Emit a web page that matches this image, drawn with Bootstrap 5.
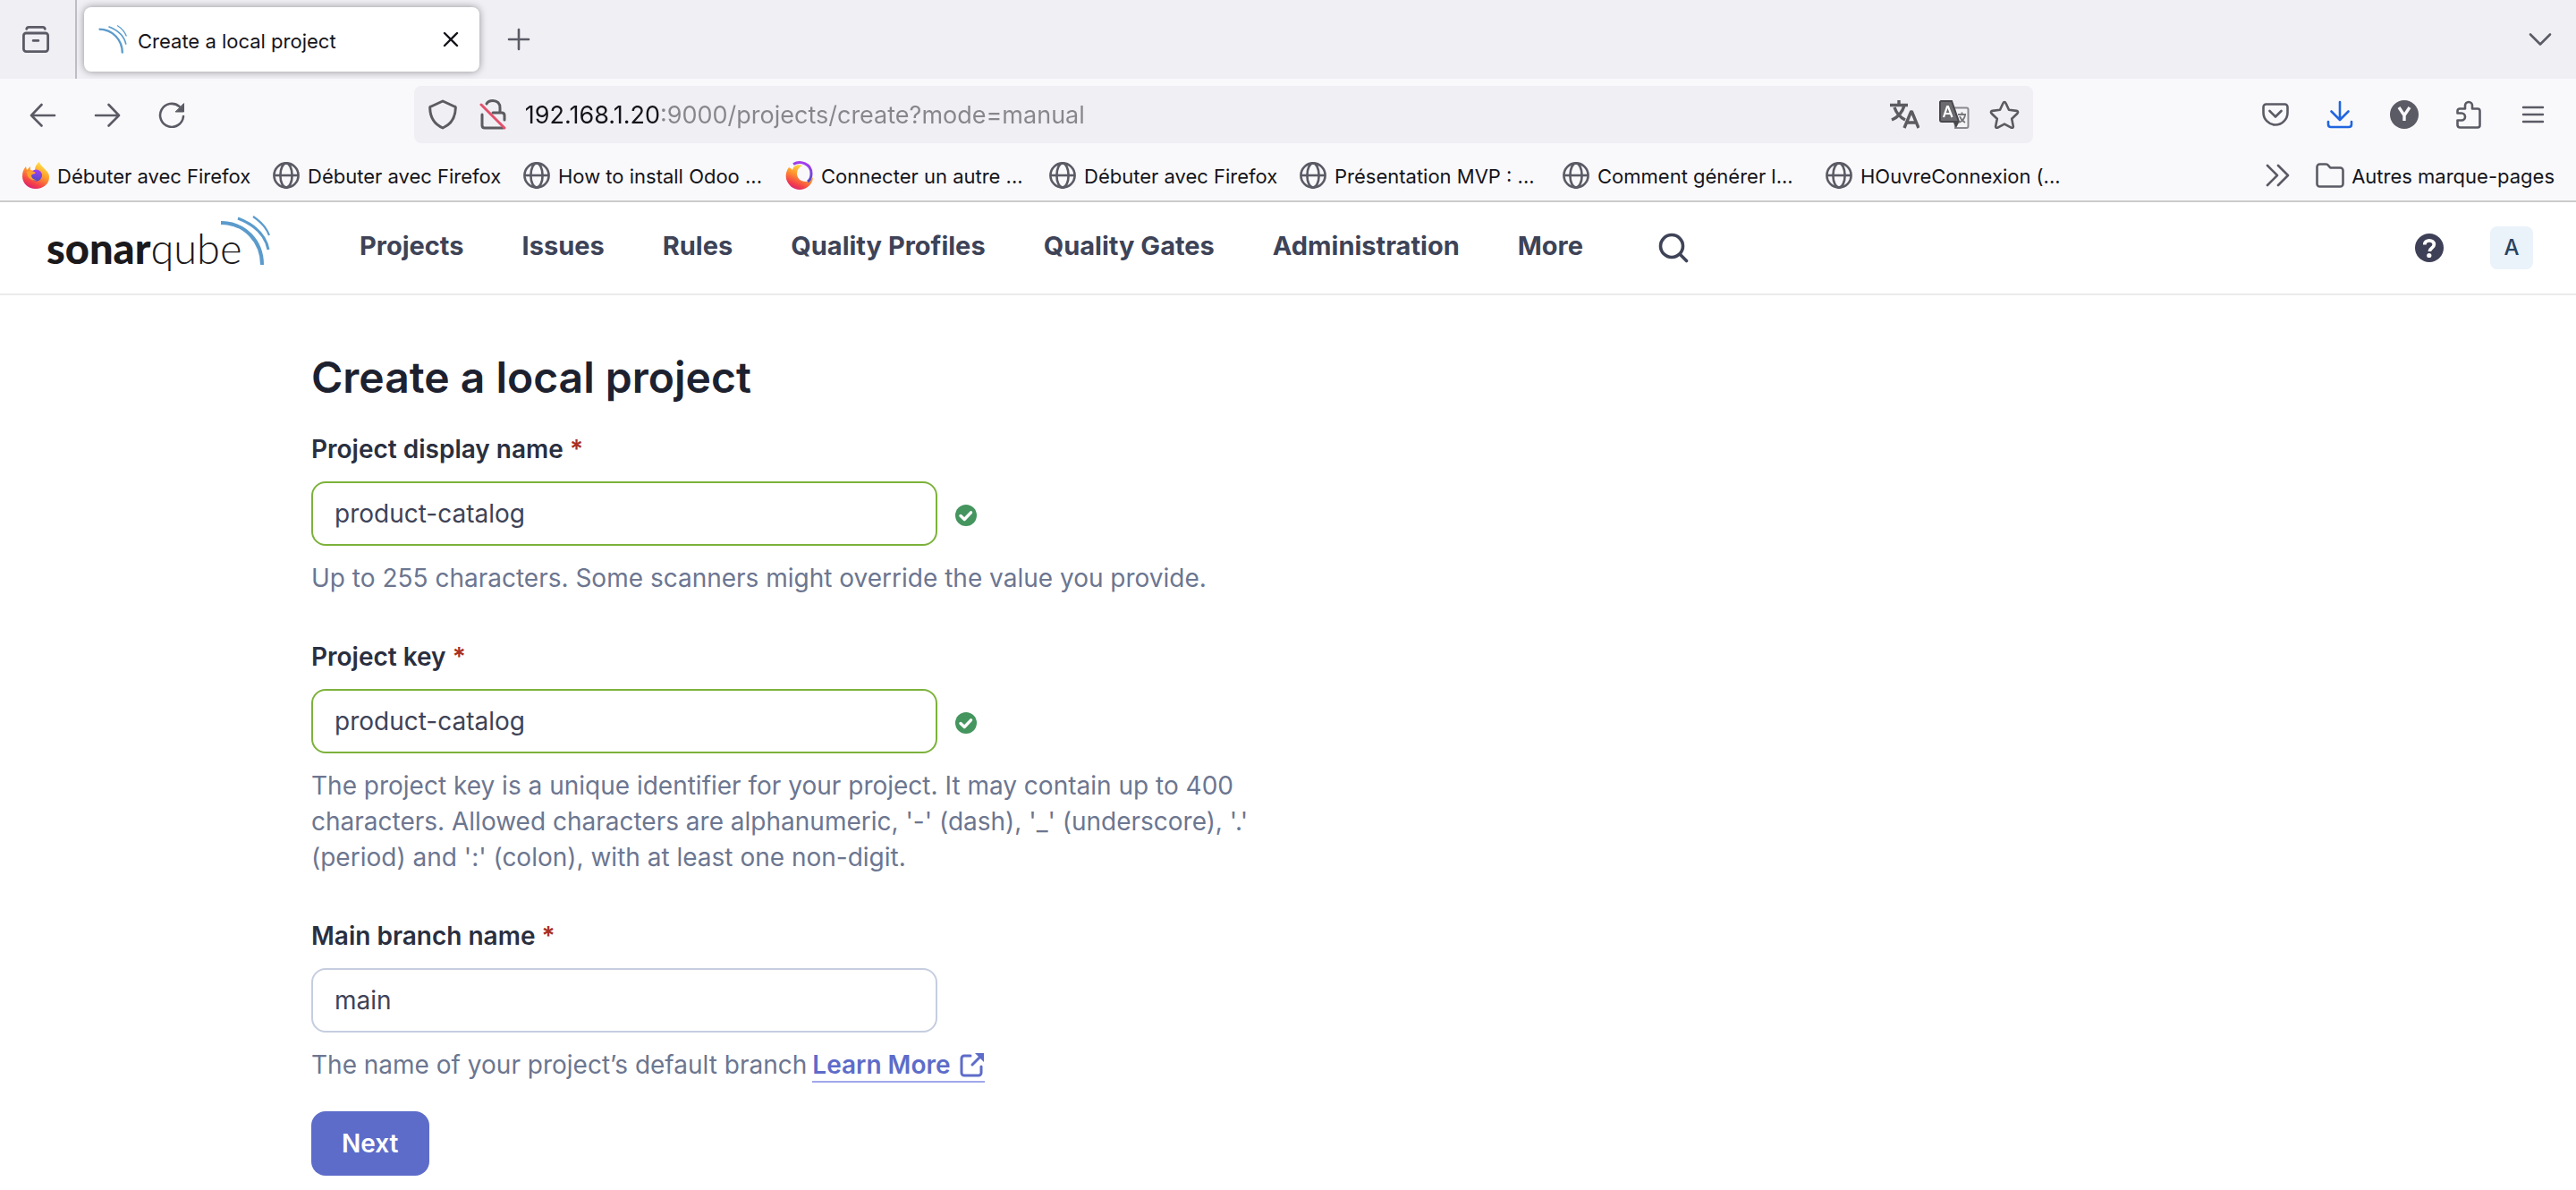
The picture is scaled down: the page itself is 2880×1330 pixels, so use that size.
<!DOCTYPE html>
<html lang="fr">
<head>
<meta charset="utf-8">
<meta name="viewport" content="width=device-width, initial-scale=1">
<title>Create a local project</title>
<link href="https://cdn.jsdelivr.net/npm/bootstrap@5.3.0/dist/css/bootstrap.min.css" rel="stylesheet">
<style>
  :root { --chrome-ink: #5b5b66; --ink: #3e4357; --indigo: #5d6cc9; }
  body { font-family: Inter, "Liberation Sans", sans-serif; font-size: 28px; line-height: 40px; color: var(--ink); background: #fff; }
  svg { display: block; flex: none; }
  svg.line { fill: none; stroke: currentColor; stroke-width: 3; stroke-linecap: round; stroke-linejoin: round; }
  .tool { width: 72px; height: 64px; padding: 0; border: 0; background: none; color: var(--chrome-ink); display: flex; align-items: center; justify-content: center; }

  /* browser window */
  .tab-strip { height: 88px; background: #f0eff4; color: var(--chrome-ink); }
  .view-cell { width: 86px; border-right: 2px solid #bebdc3; }
  .tab-active { width: 442px; height: 72px; border-radius: 8px; background: #fff; color: #15141a; box-shadow: 0 0 8px rgba(0,0,0,.4); font-size: 22px; }
  .tab-active .tool { width: 32px; color: #15141a; }
  .nav-strip { height: 80px; padding: 0 12px; background: #f9f9fb; }
  .flex-gap { flex: 236 1 0; }
  .url-box { flex: 1812 1 0; height: 64px; border-radius: 8px; background: #f0eff4; color: #5b5b60; }
  .url-box .tool { width: 56px; color: #5b5b60; }
  .url-field { font-size: 27px; border: 0; padding: 2px 0 0; outline: 0; color: transparent; background: linear-gradient(90deg, #15141a 152px, #87868b 152px); -webkit-background-clip: text; background-clip: text; min-width: 0; }
  .mark-strip { height: 56px; background: #f9f9fb; font-size: 22px; }
  .mark-link { display: flex; align-items: center; gap: 8px; margin-right: 24px; color: #15141a; text-decoration: none; white-space: nowrap; }
  .mark-link span { width: 216px; padding-top: 2px; }
  .mark-link.long span { width: 230px; }
  .mark-link svg { color: var(--chrome-ink); }
  .more-marks { width: 84px; }
  .window-edge { border-bottom: 2px solid #cccccd; }

  /* application header */
  .app-head { height: 104px; border-bottom: 2px solid #ebebeb; }
  .brand { width: 250px; margin: 0 100px 0 52px; color: #1b191b; font-family: Lato, "Open Sans", sans-serif; font-size: 47px; line-height: 56px; text-decoration: none; }
  .brand b { font-weight: 900; }
  .brand span { font-weight: 300; }
  .brand svg { position: absolute; right: 0; top: -8px; }
  .main-nav { gap: 65px; padding-bottom: 4px; }
  .main-nav a { color: var(--ink); font-size: 29px; font-weight: 700; text-decoration: none; }
  .search-btn { margin-left: 65px; }
  .avatar { width: 48px; height: 48px; margin: 0 48px 0 32px; border: 0; border-radius: 8px; background: #eaf2fa; color: #28435f; font-size: 24px; font-weight: 500; padding: 0; }

  /* form */
  .form-area { padding: 64px 348px 16px; }
  h1 { font-size: 48px; line-height: 56px; font-weight: 600; color: #1d212f; margin-bottom: 32px; }
  .field { margin-bottom: 48px; }
  .field:last-of-type { margin-bottom: 32px; }
  .field-label { display: block; font-weight: 600; color: #2a2f40; margin-bottom: 16px; }
  .req { color: #a92f22; }
  .text-in { width: 700px; height: 72px; border: 2px solid #c5cddf; border-radius: 16px; padding: 0 24px; font-size: 28px; color: var(--ink); box-shadow: none; }
  .text-in.ok { border-color: #7cb23a; }
  .hint { margin: 16px 0 0; max-width: 1052px; color: #6c7690; }
  .more-link { color: var(--indigo); font-weight: 600; text-decoration: none; box-shadow: inset 0 -2px #a0a8ea; display: inline-flex; align-items: center; gap: 10px; margin-left: 6px; }
  .next-btn { height: 72px; padding: 0 34px; border: 0; border-radius: 16px; background: var(--indigo); color: #fff; font-size: 28px; font-weight: 600; }
</style>
<script src="https://cdn.jsdelivr.net/npm/bootstrap@5.3.0/dist/js/bootstrap.bundle.min.js"></script>
</head>
<body>
<svg width="0" height="0" class="position-absolute" aria-hidden="true">
  <defs>
    <symbol id="globe" viewBox="0 0 32 32"><g fill="none" stroke="currentColor" stroke-width="2.6"><circle cx="16" cy="16" r="13.6"/><ellipse cx="16" cy="16" rx="6.6" ry="13.6"/><path d="M2.4 16h27.2"/></g></symbol>
    <symbol id="waves" viewBox="0 0 56 56"><g fill="none" stroke="#5b9bcc"><path stroke-width="4" d="M1 8C28 8 47 29 47 55"/><path stroke-width="3" d="M20 3C38 10 51 22 54 38"/><path stroke-width="2.2" d="M37 1c9 6 15 13 18 21"/></g></symbol>
    <symbol id="tick" viewBox="0 0 24 24"><circle cx="12" cy="12" r="12" fill="#45955f"/><path d="M6 12.5l4.200 4L17.500 8.800" fill="none" stroke="#fff" stroke-width="3.400" stroke-linecap="round" stroke-linejoin="round"/></symbol>
    <linearGradient id="flame" x1=".8" y1="0" x2=".3" y2="1"><stop offset="0" stop-color="#fff04a"/><stop offset=".45" stop-color="#ff9a2c"/><stop offset=".8" stop-color="#f4404a"/><stop offset="1" stop-color="#d81f78"/></linearGradient>
    <linearGradient id="orb" x1=".6" y1="0" x2=".4" y2="1"><stop offset="0" stop-color="#a63ef0"/><stop offset="1" stop-color="#4a4cc4"/></linearGradient>
  </defs>
</svg>

<header class="window-edge">
  <div class="tab-strip d-flex align-items-center">
    <div class="view-cell h-100 d-flex align-items-center">
      <button class="tool w-100 pe-1" aria-label="Firefox View">
        <svg class="line" width="30" height="32" viewBox="0 0 32 32"><path d="M5 3.500c.4-1.500 1.200-2 2.500-2h17c1.300 0 2.100.5 2.500 2"/><rect x="1.500" y="8.500" width="29" height="22" rx="3"/><path d="M13 17.500h6"/></svg>
      </button>
    </div>
    <div class="tab-active d-flex align-items-center ms-2 ps-3 pe-3">
      <svg width="32" height="32"><use href="#waves"/></svg>
      <span class="ms-2 ps-1 pt-1 flex-grow-1">Create a local project</span>
      <button class="tool" aria-label="Fermer l’onglet"><svg class="line" width="18" height="18" viewBox="0 0 18 18"><path stroke-width="2.400" d="M2 2l14 14M16 2L2 16"/></svg></button>
    </div>
    <button class="tool ms-2" aria-label="Nouvel onglet"><svg class="line" width="26" height="26" viewBox="0 0 26 26"><path stroke-width="2.600" d="M13 2v22M2 13h22"/></svg></button>
    <button class="tool ms-auto me-1" aria-label="Lister les onglets"><svg class="line" width="26" height="16" viewBox="0 0 26 16"><path stroke-width="2.600" d="M2 2.500l11 11 11-11"/></svg></button>
  </div>

  <div class="nav-strip d-flex align-items-center">
    <button class="tool" aria-label="Précédent"><svg class="line" width="30" height="28" viewBox="0 0 30 28"><path stroke-width="2.600" d="M28 15H2M13.500 3L2 15l11.500 11.500"/></svg></button>
    <button class="tool" aria-label="Suivant"><svg class="line" width="30" height="28" viewBox="0 0 30 28"><path stroke-width="2.600" d="M2 15h26M16.500 3L28 15 16.500 26.500"/></svg></button>
    <button class="tool" aria-label="Actualiser"><svg class="line" width="30" height="30" viewBox="0 0 30 30"><path stroke-width="2.600" d="M28 17A13 13 0 1 1 23.500 6"/><path d="M28.500 3v9h-9z" fill="currentColor" stroke-width="1"/></svg></button>
    <div class="flex-gap"></div>
    <div class="url-box d-flex align-items-center px-1">
      <button class="tool" aria-label="Protection"><svg class="line" width="32" height="34" viewBox="0 0 32 34"><path d="M16 2l13 6c1 0 1.500 1 1.300 2C30 20 25 28 16 32 7 28 2 20 1.700 10c-.2-1 .3-2 1.300-2z"/></svg></button>
      <button class="tool" aria-label="Connexion non sécurisée"><svg class="line" width="30" height="34" viewBox="0 0 30 34"><path d="M8 5c1-2 4-3.500 7-3.500 5 0 8 3 8 8V15M3 17v12c0 2 1 3 3 3h20M15 15h10c2 0 3 1 3 3v5"/><path d="M2 6l26 26" stroke="#e3506b"/></svg></button>
      <input class="url-field ms-2 flex-grow-1" type="text" aria-label="Adresse" value="192.168.1.20:9000/projects/create?mode=manual">
      <button class="tool" aria-label="Traduire"><svg class="line" width="34" height="32" viewBox="0 0 34 32"><path stroke-linecap="butt" stroke-width="3.400" d="M1 5.500h20M11 0v5M17 6C15 13 10 19 3 22M6 8c2 6 6 11 12 14M17 31l7.500-18h1L33 31M19.500 25h11"/></svg></button>
      <button class="tool" aria-label="Traduire cette page"><svg width="34" height="32" viewBox="0 0 34 32"><path d="M17 8.500h13.500a2 2 0 0 1 2 2V29a2 2 0 0 1-2 2H18z" fill="#f4f4f6" stroke="#8a8a8e" stroke-width="2"/><path d="M2 1h12l8 23H3a2 2 0 0 1-2-2V2z" fill="#6c6c70" stroke="#48484c" stroke-width="2"/><path d="M5 19L9 7h1l4.500 12M6.500 15h6" fill="none" stroke="#fff" stroke-width="2.200"/><path d="M21 16h9M25.500 13.500V16M29 17c-1 4-4 7-7 8M23 18c1 3 3 5 6 7" fill="none" stroke="#77777b" stroke-width="1.800"/><path d="M16 25l3 6 3-6z" fill="#48484c"/></svg></button>
      <button class="tool" aria-label="Ajouter aux marque-pages"><svg class="line" width="34" height="32" viewBox="0 0 34 32"><path stroke-width="2.600" d="M17 2c.8 0 1.200.5 1.500 1.200l3.500 7.600 8.500 1.100c1.500.2 2 1.800 1 2.800l-6.300 6 1.600 8.300c.3 1.500-1 2.400-2.300 1.700L17 26.600l-7.500 4.100c-1.300.7-2.600-.2-2.300-1.700l1.600-8.300-6.300-6c-1-1-.5-2.600 1-2.800l8.500-1.100 3.500-7.600C15.800 2.500 16.200 2 17 2z"/></svg></button>
    </div>
    <div class="flex-gap"></div>
    <button class="tool" aria-label="Pocket"><svg class="line" width="30" height="26" viewBox="0 0 30 26"><path stroke-width="2.600" d="M4.500 1.500h21a3 3 0 0 1 3 3V11c0 7-6 13.500-13.500 13.500S1.500 18 1.500 11V4.500a3 3 0 0 1 3-3zM8.500 9l6.500 6.500L21.500 9"/></svg></button>
    <button class="tool" aria-label="Téléchargements"><svg class="line" width="30" height="32" viewBox="0 0 30 32" color="#2165e0"><path stroke-width="2.600" d="M15 2v19M5.500 12.500L15 22l9.500-9.500M2 24v3c0 2 1 3 3 3h20c2 0 3-1 3-3v-3"/></svg></button>
    <button class="tool" aria-label="Compte Y"><svg width="32" height="32" viewBox="0 0 32 32"><circle cx="16" cy="16" r="16" fill="#5b5b66"/><path d="M10 8l6 9 6-9M16 16v7" fill="none" stroke="#f9f9fb" stroke-width="3.400"/></svg></button>
    <button class="tool" aria-label="Extensions"><svg class="line" width="28" height="32" viewBox="0 0 28 32"><path stroke-width="2.600" d="M4.500 9.500H10V6a4 4 0 0 1 8 0v3.500h6a2.500 2.500 0 0 1 2.500 2.500v16a2.500 2.500 0 0 1-2.500 2.500H4.500A3 3 0 0 1 1.500 28v-5.500H6a4 4 0 0 0 0-8H1.500V12a2.500 2.500 0 0 1 3-2.500z"/></svg></button>
    <button class="tool" aria-label="Menu"><svg class="line" width="26" height="20" viewBox="0 0 26 20"><path stroke-width="2.400" d="M2 2h22M2 10h22M2 18h22"/></svg></button>
  </div>

  <nav class="mark-strip d-flex align-items-center px-4" aria-label="Marque-pages">
    <a class="mark-link" href="#"><svg width="32" height="32" viewBox="0 0 32 32"><path d="M16 31C7.500 31 1 25 1 17c0-5 1.500-8 4-11l1 4 4-4v4l5 1c0-5 2-8 5-10 1 4 4 5 7 9 3 3 4 5 4 8 0 7.500-6.500 13-15 13z" fill="url(#flame)"/><circle cx="16.500" cy="16" r="6.500" fill="url(#orb)"/><path d="M6 12c4-2 7-1 10 1-1 2-4 1-5 3 0 3 3 5 6 5-5 2-11-2-11-9z" fill="#ffa22e"/></svg><span>Débuter avec Firefox</span></a>
    <a class="mark-link" href="#"><svg width="32" height="32"><use href="#globe"/></svg><span>Débuter avec Firefox</span></a>
    <a class="mark-link long" href="#"><svg width="32" height="32"><use href="#globe"/></svg><span>How to install Odoo ...</span></a>
    <a class="mark-link long" href="#"><svg width="32" height="32" viewBox="0 0 32 32"><path d="M4 7C1 11 0 15 1 20c2 7 8 12 15 12s15-6 15-14c-2 3-5 5-8 5-6 0-10-4-10-9 0-4 2-7 6-9C14 3 9 5 8 10 7 9 6 8 4 7z" fill="url(#flame)"/><path d="M9 3.500C17-1 29 3 29 14c0 4-1 7-4 9" fill="none" stroke="url(#orb)" stroke-width="3"/></svg><span>Connecter un autre ...</span></a>
    <a class="mark-link" href="#"><svg width="32" height="32"><use href="#globe"/></svg><span>Débuter avec Firefox</span></a>
    <a class="mark-link long" href="#"><svg width="32" height="32"><use href="#globe"/></svg><span>Présentation MVP : ...</span></a>
    <a class="mark-link long" href="#"><svg width="32" height="32"><use href="#globe"/></svg><span>Comment générer l...</span></a>
    <a class="mark-link long" href="#"><svg width="32" height="32"><use href="#globe"/></svg><span>HOuvreConnexion (...</span></a>
    <button class="tool more-marks ms-auto" aria-label="Plus de marque-pages"><svg class="line" width="28" height="26" viewBox="0 0 28 26"><path stroke-width="2.600" d="M2 2l11 11L2 24M14 2l11 11-11 11"/></svg></button>
    <a class="mark-link me-0" href="#"><svg class="line" width="32" height="28" viewBox="0 0 32 28"><path stroke-width="2.600" d="M4.500 1.500h7c1.500 0 2 .6 3 1.800l1.800 2.200h11.200a3 3 0 0 1 3 3v15a3 3 0 0 1-3 3h-23a3 3 0 0 1-3-3v-19a3 3 0 0 1 3-3z"/></svg><span class="w-auto">Autres marque-pages</span></a>
  </nav>
</header>

<div class="app-head d-flex align-items-center">
  <a class="brand position-relative" href="#" aria-label="sonarqube"><b>sonar</b><span>qube</span><svg width="56" height="56"><use href="#waves"/></svg></a>
  <nav class="main-nav d-flex" aria-label="Principal">
    <a href="#">Projects</a><a href="#">Issues</a><a href="#">Rules</a><a href="#">Quality Profiles</a><a href="#">Quality Gates</a><a href="#">Administration</a><a href="#">More</a>
  </nav>
  <button class="tool search-btn" aria-label="Search"><svg class="line" width="34" height="34" viewBox="0 0 34 34" color="#3e4357"><g stroke-width="3.600"><circle cx="15" cy="15" r="12.500"/><path d="M24.500 24.500l7 7"/></g></svg></button>
  <button class="tool ms-auto" aria-label="Help"><svg width="32" height="32" viewBox="0 0 32 32"><circle cx="16" cy="16" r="16" fill="#3e4057"/><path d="M10.800 12.500c0-3 2.300-4.700 5.200-4.700 3 0 5.300 1.700 5.300 4.500 0 4-5 3.800-5 7.700" fill="none" stroke="#fff" stroke-width="3.800"/><circle cx="15.800" cy="24.500" r="2.600" fill="#fff"/></svg></button>
  <button class="avatar">A</button>
</div>

<main class="form-area">
  <h1>Create a local project</h1>
  <form onsubmit="return false">
    <div class="field">
      <label class="field-label" for="pname">Project display name <span class="req">*</span></label>
      <div class="d-flex align-items-center gap-3">
        <input id="pname" class="form-control text-in ok" type="text" value="product-catalog">
        <svg class="ms-1 mt-1" width="24" height="24"><use href="#tick"/></svg>
      </div>
      <p class="hint">Up to 255 characters. Some scanners might override the value you provide.</p>
    </div>
    <div class="field">
      <label class="field-label" for="pkey">Project key <span class="req">*</span></label>
      <div class="d-flex align-items-center gap-3">
        <input id="pkey" class="form-control text-in ok" type="text" value="product-catalog">
        <svg class="ms-1 mt-1" width="24" height="24"><use href="#tick"/></svg>
      </div>
      <p class="hint">The project key is a unique identifier for your project. It may contain up to 400 characters. Allowed characters are alphanumeric, '-' (dash), '_' (underscore), '.' (period) and ':' (colon), with at least one non-digit.</p>
    </div>
    <div class="field">
      <label class="field-label" for="branch">Main branch name <span class="req">*</span></label>
      <input id="branch" class="form-control text-in" type="text" value="main">
      <p class="hint d-flex align-items-start"><span>The name of your project’s default branch</span> <a class="more-link" href="#">Learn More <svg width="28" height="28" viewBox="0 0 28 28"><path d="M12 4H5a3 3 0 0 0-3 3v16a3 3 0 0 0 3 3h16a3 3 0 0 0 3-3v-7" fill="none" stroke="currentColor" stroke-width="3" stroke-linecap="round"/><path d="M14 14L24 4" stroke="currentColor" stroke-width="3" stroke-linecap="round"/><path d="M17 1h10v10z" fill="currentColor"/></svg></a></p>
    </div>
    <button class="next-btn" type="submit">Next</button>
  </form>
</main>
</body>
</html>
